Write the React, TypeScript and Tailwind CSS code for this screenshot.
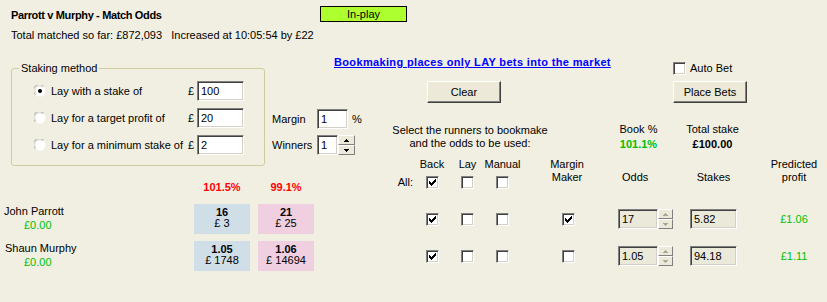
import React from "react";

const page = "bg-[#f1efe2]";

function CheckBox({ checked }: { checked?: boolean }) {
  return (
    <div className="w-[13px] h-[13px] shrink-0 bg-white border border-t-[#808080] border-l-[#808080] border-r-white border-b-white shadow-[inset_1px_1px_0_#404040,inset_-1px_-1px_0_#d4d0c8] flex items-center justify-center">
      {checked && (
        <svg width="7" height="7" viewBox="0 0 7 7" shapeRendering="crispEdges">
          <path
            d="M6 0h1v1h-1z M5 1h2v1h-2z M0 2h1v1h-1z M4 2h3v1h-3z M0 3h2v1h-2z M3 3h3v1h-3z M0 4h5v1h-5z M1 5h3v1h-3z M2 6h1v1h-1z"
            fill="#000"
          />
        </svg>
      )}
    </div>
  );
}

function Radio({ checked }: { checked?: boolean }) {
  return (
    <svg width="12" height="12" viewBox="0 0 12 12">
      <circle cx="6" cy="6" r="5.5" fill="#fff" />
      <path d="M1.2 9.5A5.4 5.4 0 0 1 9.5 1.2" stroke="#a9a9a0" strokeWidth="1" fill="none" />
      <path d="M2.2 8.8A4.4 4.4 0 0 1 8.8 2.2" stroke="#d8d6cc" strokeWidth="1" fill="none" />
      {checked && <circle cx="6" cy="6" r="2" fill="#000" />}
    </svg>
  );
}

function Arrow({ down, color }: { down?: boolean; color: string }) {
  return (
    <svg width="5" height="3" viewBox="0 0 5 3" shapeRendering="crispEdges">
      <path
        d={down ? "M0 0h5v1h-1v1h-1v1h-1v-1h-1v-1h-1z" : "M2 0h1v1h1v1h1v1h-5v-1h1v-1h1z"}
        fill={color}
      />
    </svg>
  );
}

function Spin({ disabled, className }: { disabled?: boolean; className: string }) {
  const c = disabled ? "#a8a69c" : "#000";
  const btn =
    "flex-1 flex items-center justify-center bg-[#ece9d8] border border-t-white border-l-white border-r-[#808080] border-b-[#808080]";
  return (
    <div className={`flex flex-col shrink-0 h-[20px] ${className}`}>
      <div className={btn}>
        <Arrow color={c} />
      </div>
      <div className={btn}>
        <Arrow down color={c} />
      </div>
    </div>
  );
}

function Field({
  value,
  className,
  disabled,
}: {
  value: string;
  className: string;
  disabled?: boolean;
}) {
  return (
    <div
      className={`h-[20px] shrink-0 flex items-center pl-[3px] border border-t-[#808080] border-l-[#808080] border-r-white border-b-white shadow-[inset_1px_1px_0_#404040,inset_-1px_-1px_0_#d4d0c8] ${
        disabled ? "bg-[#ebe9da]" : "bg-white"
      } ${className}`}
    >
      {value}
    </div>
  );
}

function Button({ label }: { label: string }) {
  return (
    <div className="w-[74px] h-[22px] flex items-center justify-center bg-[#ece9d8] border border-t-white border-l-white border-r-[#404040] border-b-[#404040] shadow-[inset_-1px_-1px_0_#808080]">
      {label}
    </div>
  );
}

const stakeRows = [
  { label: "Lay with a stake of", value: "100", checked: true },
  { label: "Lay for a target profit of", value: "20" },
  { label: "Lay for a minimum stake of", value: "2" },
];

const runners = [
  {
    name: "John Parrott",
    indent: "pl-[4px]",
    back: "16",
    backAmt: "£ 3",
    lay: "21",
    layAmt: "£ 25",
    mm: true,
    odds: "17",
    stake: "5.82",
    profit: "£1.06",
  },
  {
    name: "Shaun Murphy",
    indent: "pl-[5px]",
    back: "1.05",
    backAmt: "£ 1748",
    lay: "1.06",
    layAmt: "£ 14694",
    mm: false,
    odds: "1.05",
    stake: "94.18",
    profit: "£1.11",
  },
];

export default function App() {
  return (
    <div
      className={`w-[827px] h-[302px] ${page} text-[11px] leading-[13px] text-black overflow-hidden font-['Liberation_Sans',Arial,sans-serif]`}
    >
      {/* Header */}
      <div className="flex items-start pt-[6px] h-[22px]">
        <div className="w-[320px] pl-[11px] pt-[3px] font-bold tracking-[-0.35px]">
          Parrott v Murphy - Match Odds
        </div>
        <div className="w-[87px] h-[16px] border border-black bg-[#adff2f] text-center leading-[14px]">
          In-play
        </div>
      </div>
      <div className="pl-[11px] mt-[7px] h-[13px] whitespace-pre">
        Total matched so far: £872,093   Increased at 10:05:54 by £22
      </div>

      {/* Settings area */}
      <div className="flex h-[156px] mt-[6px]">
        <div className="w-[264px] shrink-0 flex flex-col">
          <div className="relative ml-[11px] mt-[20px] w-[254px] h-[98px] border border-[#d0cca0] rounded-[3px]">
            <span className={`absolute left-[7px] top-[-7px] px-[2px] ${page}`}>Staking method</span>
            <div className="flex flex-col gap-[7px] pt-[12px]">
              {stakeRows.map((r) => (
                <div key={r.label} className="flex items-center h-[20px]">
                  <div className="ml-[22px] w-[12px] shrink-0 flex">
                    <Radio checked={r.checked} />
                  </div>
                  <div className="ml-[5px] w-[137px] shrink-0">{r.label}</div>
                  <div className="w-[9px] shrink-0">£</div>
                  <Field value={r.value} className="w-[47px]" />
                </div>
              ))}
            </div>
          </div>
          <div className="flex mt-[15px] font-bold text-[#ff0000]">
            <div className="w-[194px] shrink-0" />
            <div className="w-[56px] shrink-0 text-center">101.5%</div>
            <div className="w-[56px] shrink-0 ml-[8px] text-center">99.1%</div>
          </div>
        </div>

        <div className="w-[563px] shrink-0 flex flex-col">
          <div className="flex h-[26px]">
            <div className="ml-[70px] mt-[8px] w-[339px] shrink-0 font-bold text-[#0000ff] underline tracking-[0.35px]">
              Bookmaking places only LAY bets into the market
            </div>
            <div className="flex items-center mt-[14px] h-[13px]">
              <CheckBox />
              <span className="ml-[4px]">Auto Bet</span>
            </div>
          </div>
          <div className="flex mt-[7px]">
            <div className="ml-[163px]">
              <Button label="Clear" />
            </div>
            <div className="ml-[172px]">
              <Button label="Place Bets" />
            </div>
          </div>

          <div className="flex h-[55px]">
            <div className="w-[126px] shrink-0 pl-[8px] pt-[6px] flex flex-col gap-[6px]">
              <div className="flex items-center h-[20px]">
                <div className="w-[45px] shrink-0">Margin</div>
                <Field value="1" className="w-[31px]" />
                <span className="ml-[4px]">%</span>
              </div>
              <div className="flex items-center h-[20px]">
                <div className="w-[45px] shrink-0">Winners</div>
                <Field value="1" className="w-[21px]" />
                <Spin className="w-[17px]" />
              </div>
            </div>
            <div className="w-[160px] shrink-0 pt-[21px] text-center">
              <div>Select the runners to bookmake</div>
              <div>and the odds to be used:</div>
            </div>
            <div className="w-[50px] shrink-0" />
            <div className="w-[77px] shrink-0 pt-[20px] text-center">
              <div>Book %</div>
              <div className="mt-[2px] font-bold text-[#00c000]">101.1%</div>
            </div>
            <div className="w-[71px] shrink-0 pt-[20px] text-center">
              <div>Total stake</div>
              <div className="mt-[2px] font-bold">£100.00</div>
            </div>
          </div>

          {/* Column headers */}
          <div className="flex ml-[126px]">
            <div className="w-[30px] shrink-0 pt-[18px]">
              <div className="h-[13px] flex items-center justify-end pr-[7px]">All:</div>
            </div>
            <div className="w-[24px] shrink-0 flex flex-col items-center">
              <div>Back</div>
              <div className="mt-[5px]">
                <CheckBox checked />
              </div>
            </div>
            <div className="w-[47px] shrink-0 flex flex-col items-center">
              <div>Lay</div>
              <div className="mt-[5px]">
                <CheckBox />
              </div>
            </div>
            <div className="w-[23px] shrink-0 flex flex-col items-center">
              <div>Manual</div>
              <div className="mt-[5px]">
                <CheckBox />
              </div>
            </div>
            <div className="w-[104px] shrink-0 pl-[2px] flex flex-col items-center">
              <div>Margin</div>
              <div>Maker</div>
            </div>
            <div className="w-[62px] shrink-0 pt-[13px] pl-[4px]">Odds</div>
            <div className="w-[67px] shrink-0 pt-[13px] text-center">Stakes</div>
            <div className="w-[80px] shrink-0 pl-[14px] text-center">
              <div>Predicted</div>
              <div>profit</div>
            </div>
          </div>
        </div>
      </div>

      {/* Runners */}
      <div className="flex flex-col gap-[7px]">
        {runners.map((r) => (
          <div key={r.name} className="flex items-center h-[30px]">
            <div className="w-[194px] shrink-0 h-[30px] flex flex-col leading-[14px]">
              <div className={r.indent}>{r.name}</div>
              <div className="pl-[24px] text-[#00c000]">£0.00</div>
            </div>
            <div className="w-[56px] shrink-0 h-[30px] bg-[#d0dee8] flex flex-col items-center pt-[3px] leading-[11px]">
              <div className="font-bold">{r.back}</div>
              <div>{r.backAmt}</div>
            </div>
            <div className="w-[56px] shrink-0 h-[30px] ml-[8px] bg-[#f0cfe0] flex flex-col items-center pt-[3px] leading-[11px]">
              <div className="font-bold">{r.lay}</div>
              <div>{r.layAmt}</div>
            </div>
            <div className="w-[76px] shrink-0" />
            <div className="w-[30px] shrink-0" />
            <div className="w-[24px] shrink-0 flex justify-center">
              <CheckBox checked />
            </div>
            <div className="w-[47px] shrink-0 flex justify-center">
              <CheckBox />
            </div>
            <div className="w-[23px] shrink-0 flex justify-center">
              <CheckBox />
            </div>
            <div className="w-[104px] shrink-0 pl-[4px] flex justify-center">
              <CheckBox checked={r.mm} />
            </div>
            <div className="w-[62px] shrink-0 flex">
              <Field value={r.odds} disabled className="w-[40px]" />
              <Spin disabled className="w-[15px]" />
            </div>
            <div className="w-[67px] shrink-0 flex justify-center">
              <Field value={r.stake} disabled className="w-[47px]" />
            </div>
            <div className="w-[80px] shrink-0 pl-[14px] text-center text-[#00c000]">{r.profit}</div>
          </div>
        ))}
      </div>
    </div>
  );
}
